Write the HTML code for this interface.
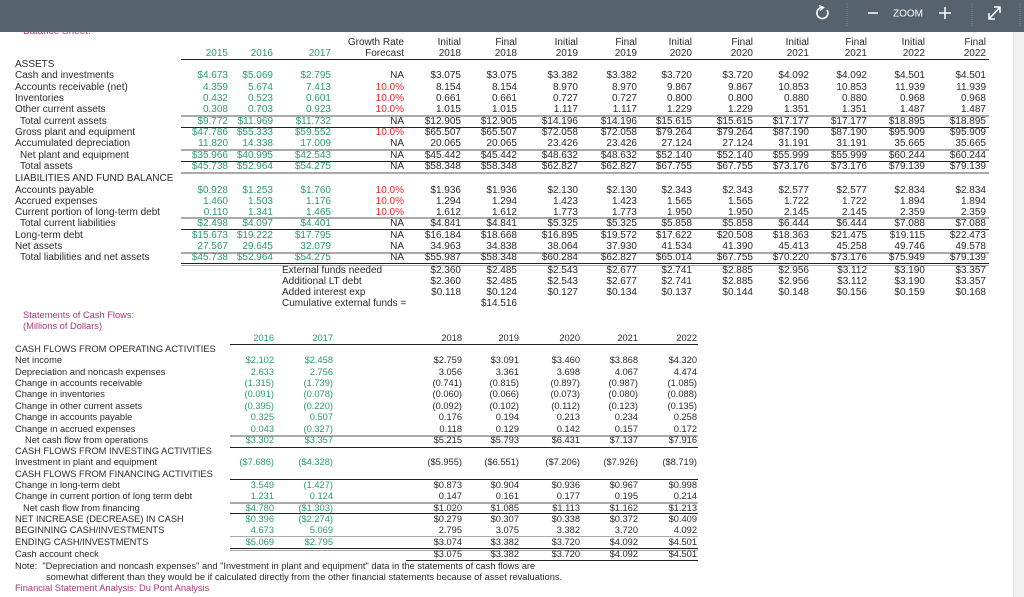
<!DOCTYPE html>
<html><head><meta charset="utf-8">
<style>
*{margin:0;padding:0;box-sizing:border-box}
body{width:1024px;height:597px;overflow:hidden;background:#fff;font-family:"Liberation Sans",Arial,sans-serif;font-size:10px;color:#2a2a2a;position:relative}
.tb{position:absolute;left:0;top:0;width:1024px;height:32px;background:#56636e;z-index:2}
.sb{position:absolute;left:1013px;top:32px;width:11px;height:565px;background:#f1f1f1;border-left:1px solid #ddd}
.r{position:absolute;left:0;width:1010px;height:11px;line-height:11px;white-space:nowrap}
.r span{position:absolute;width:70px;text-align:right}
.lb{position:absolute;left:15px}
.lb2{position:absolute;left:20px}
.g{color:#2c9a6b}
.red{color:#e8262b}
.pu{color:#a23a78}
.a{left:158px}.b{left:203px}.c{left:261px}.d{left:334px}.e{left:391px}.f{left:447px}.gg{left:508px}.h{left:567px}.i{left:622px}.j{left:683px}.k{left:739px}.l{left:797px}.m{left:855px}.n{left:916px}
.p{left:204px}.q{left:263px}.rr{left:392px}.s{left:449px}.t{left:510px}.u{left:568px}.v{left:627px}
.hl{position:absolute;height:1px;background:#222}
.gl{position:absolute;height:2px;background:#aaa}
.cf{font-size:9.3px}
</style></head><body>
<div class="tb">
<svg width="1024" height="32" style="position:absolute;left:0;top:0">
<path d="M822 7.5 A5.5 5.5 0 1 0 827 10" fill="none" stroke="#fff" stroke-width="1.6"/>
<path d="M819 5.5 L823.5 7.5 L820 10.5" fill="none" stroke="#fff" stroke-width="1.4"/>
<line x1="847" y1="3" x2="847" y2="26" stroke="#7d8891" stroke-dasharray="1,1"/>
<line x1="868" y1="13" x2="878" y2="13" stroke="#fff" stroke-width="1.5"/>
<text x="893" y="16.5" fill="#fff" font-family="Liberation Sans" font-size="10">ZOOM</text>
<line x1="939" y1="13" x2="951" y2="13" stroke="#fff" stroke-width="1.5"/>
<line x1="945" y1="7" x2="945" y2="19" stroke="#fff" stroke-width="1.5"/>
<line x1="972" y1="3" x2="972" y2="26" stroke="#7d8891" stroke-dasharray="1,1"/>
<line x1="989" y1="19" x2="1000" y2="7" stroke="#fff" stroke-width="1.5"/>
<path d="M994 7 H1000 V13 M989 13 V19 H995" fill="none" stroke="#fff" stroke-width="1.5"/>
<line x1="1020" y1="3" x2="1020" y2="26" stroke="#7d8891" stroke-dasharray="1,1"/>
</svg>
</div>
<div class="r pu" style="top:26px;left:23px;height:11px;z-index:1"><span style="left:0;width:200px;text-align:left">Balance Sheet:</span></div>
<div class="sb"></div>

<div class="r" style="top:37px"><span class="d">Growth Rate</span><span class="e">Initial</span><span class="f">Final</span><span class="gg">Initial</span><span class="h">Final</span><span class="i">Initial</span><span class="j">Final</span><span class="k">Initial</span><span class="l">Final</span><span class="m">Initial</span><span class="n">Final</span></div>
<div class="r" style="top:48px"><span class="a g">2015</span><span class="b g">2016</span><span class="c g">2017</span><span class="d">Forecast</span><span class="e">2018</span><span class="f">2018</span><span class="gg">2019</span><span class="h">2019</span><span class="i">2020</span><span class="j">2020</span><span class="k">2021</span><span class="l">2021</span><span class="m">2022</span><span class="n">2022</span></div>
<div class="hl" style="top:59px;left:181px;width:808px"></div>

<div class="r" style="top:59px"><b class="lb" style="font-weight:normal">ASSETS</b></div>
<div class="r" style="top:70px"><b class="lb" style="font-weight:normal">Cash and investments</b><span class="a g">$4.673</span><span class="b g">$5.069</span><span class="c g">$2.795</span><span class="d">NA</span><span class="e">$3.075</span><span class="f">$3.075</span><span class="gg">$3.382</span><span class="h">$3.382</span><span class="i">$3.720</span><span class="j">$3.720</span><span class="k">$4.092</span><span class="l">$4.092</span><span class="m">$4.501</span><span class="n">$4.501</span></div>
<div class="r" style="top:82px"><b class="lb" style="font-weight:normal">Accounts receivable (net)</b><span class="a g">4.359</span><span class="b g">5.674</span><span class="c g">7.413</span><span class="d red">10.0%</span><span class="e">8.154</span><span class="f">8.154</span><span class="gg">8.970</span><span class="h">8.970</span><span class="i">9.867</span><span class="j">9.867</span><span class="k">10.853</span><span class="l">10.853</span><span class="m">11.939</span><span class="n">11.939</span></div>
<div class="r" style="top:93px"><b class="lb" style="font-weight:normal">Inventories</b><span class="a g">0.432</span><span class="b g">0.523</span><span class="c g">0.601</span><span class="d red">10.0%</span><span class="e">0.661</span><span class="f">0.661</span><span class="gg">0.727</span><span class="h">0.727</span><span class="i">0.800</span><span class="j">0.800</span><span class="k">0.880</span><span class="l">0.880</span><span class="m">0.968</span><span class="n">0.968</span></div>
<div class="r" style="top:104px"><b class="lb" style="font-weight:normal">Other current assets</b><span class="a g">0.308</span><span class="b g">0.703</span><span class="c g">0.923</span><span class="d red">10.0%</span><span class="e">1.015</span><span class="f">1.015</span><span class="gg">1.117</span><span class="h">1.117</span><span class="i">1.229</span><span class="j">1.229</span><span class="k">1.351</span><span class="l">1.351</span><span class="m">1.487</span><span class="n">1.487</span></div>
<div class="gl" style="top:115px;left:181px;width:808px"></div>
<div class="r" style="top:116px"><b class="lb2" style="font-weight:normal">Total current assets</b><span class="a g">$9.772</span><span class="b g">$11.969</span><span class="c g">$11.732</span><span class="d">NA</span><span class="e">$12.905</span><span class="f">$12.905</span><span class="gg">$14.196</span><span class="h">$14.196</span><span class="i">$15.615</span><span class="j">$15.615</span><span class="k">$17.177</span><span class="l">$17.177</span><span class="m">$18.895</span><span class="n">$18.895</span></div>
<div class="hl" style="top:127px;left:181px;width:808px"></div>
<div class="r" style="top:127px"><b class="lb" style="font-weight:normal">Gross plant and equipment</b><span class="a g">$47.786</span><span class="b g">$55.333</span><span class="c g">$59.552</span><span class="d red">10.0%</span><span class="e">$65.507</span><span class="f">$65.507</span><span class="gg">$72.058</span><span class="h">$72.058</span><span class="i">$79.264</span><span class="j">$79.264</span><span class="k">$87.190</span><span class="l">$87.190</span><span class="m">$95.909</span><span class="n">$95.909</span></div>
<div class="r" style="top:138px"><b class="lb" style="font-weight:normal">Accumulated depreciation</b><span class="a g">11.820</span><span class="b g">14.338</span><span class="c g">17.009</span><span class="d">NA</span><span class="e">20.065</span><span class="f">20.065</span><span class="gg">23.426</span><span class="h">23.426</span><span class="i">27.124</span><span class="j">27.124</span><span class="k">31.191</span><span class="l">31.191</span><span class="m">35.665</span><span class="n">35.665</span></div>
<div class="gl" style="top:149px;left:181px;width:808px"></div>
<div class="r" style="top:150px"><b class="lb2" style="font-weight:normal">Net plant and equipment</b><span class="a g">$35.966</span><span class="b g">$40.995</span><span class="c g">$42.543</span><span class="d">NA</span><span class="e">$45.442</span><span class="f">$45.442</span><span class="gg">$48.632</span><span class="h">$48.632</span><span class="i">$52.140</span><span class="j">$52.140</span><span class="k">$55.999</span><span class="l">$55.999</span><span class="m">$60.244</span><span class="n">$60.244</span></div>
<div class="hl" style="top:161px;left:181px;width:808px"></div>
<div class="r" style="top:161px"><b class="lb2" style="font-weight:normal">Total assets</b><span class="a g">$45.738</span><span class="b g">$52.964</span><span class="c g">$54.275</span><span class="d">NA</span><span class="e">$58.348</span><span class="f">$58.348</span><span class="gg">$62.827</span><span class="h">$62.827</span><span class="i">$67.755</span><span class="j">$67.755</span><span class="k">$73.176</span><span class="l">$73.176</span><span class="m">$79.139</span><span class="n">$79.139</span></div>
<div class="gl" style="top:172px;left:181px;width:808px"></div>
<div class="r" style="top:173px"><b class="lb" style="font-weight:normal">LIABILITIES AND FUND BALANCE</b></div>
<div class="r" style="top:185px"><b class="lb" style="font-weight:normal">Accounts payable</b><span class="a g">$0.928</span><span class="b g">$1.253</span><span class="c g">$1.760</span><span class="d red">10.0%</span><span class="e">$1.936</span><span class="f">$1.936</span><span class="gg">$2.130</span><span class="h">$2.130</span><span class="i">$2.343</span><span class="j">$2.343</span><span class="k">$2.577</span><span class="l">$2.577</span><span class="m">$2.834</span><span class="n">$2.834</span></div>
<div class="r" style="top:196px"><b class="lb" style="font-weight:normal">Accrued expenses</b><span class="a g">1.460</span><span class="b g">1.503</span><span class="c g">1.176</span><span class="d red">10.0%</span><span class="e">1.294</span><span class="f">1.294</span><span class="gg">1.423</span><span class="h">1.423</span><span class="i">1.565</span><span class="j">1.565</span><span class="k">1.722</span><span class="l">1.722</span><span class="m">1.894</span><span class="n">1.894</span></div>
<div class="r" style="top:207px"><b class="lb" style="font-weight:normal">Current portion of long-term debt</b><span class="a g">0.110</span><span class="b g">1.341</span><span class="c g">1.465</span><span class="d red">10.0%</span><span class="e">1.612</span><span class="f">1.612</span><span class="gg">1.773</span><span class="h">1.773</span><span class="i">1.950</span><span class="j">1.950</span><span class="k">2.145</span><span class="l">2.145</span><span class="m">2.359</span><span class="n">2.359</span></div>
<div class="gl" style="top:217px;left:181px;width:808px"></div>
<div class="r" style="top:218px"><b class="lb2" style="font-weight:normal">Total current liabilities</b><span class="a g">$2.498</span><span class="b g">$4.097</span><span class="c g">$4.401</span><span class="d">NA</span><span class="e">$4.841</span><span class="f">$4.841</span><span class="gg">$5.325</span><span class="h">$5.325</span><span class="i">$5.858</span><span class="j">$5.858</span><span class="k">$6.444</span><span class="l">$6.444</span><span class="m">$7.088</span><span class="n">$7.088</span></div>
<div class="hl" style="top:229px;left:181px;width:808px"></div>
<div class="r" style="top:230px"><b class="lb" style="font-weight:normal">Long-term debt</b><span class="a g">$15.673</span><span class="b g">$19.222</span><span class="c g">$17.795</span><span class="d">NA</span><span class="e">$16.184</span><span class="f">$18.668</span><span class="gg">$16.895</span><span class="h">$19.572</span><span class="i">$17.622</span><span class="j">$20.508</span><span class="k">$18.363</span><span class="l">$21.475</span><span class="m">$19.115</span><span class="n">$22.473</span></div>
<div class="r" style="top:241px"><b class="lb" style="font-weight:normal">Net assets</b><span class="a g">27.567</span><span class="b g">29.645</span><span class="c g">32.079</span><span class="d">NA</span><span class="e">34.963</span><span class="f">34.838</span><span class="gg">38.064</span><span class="h">37.930</span><span class="i">41.534</span><span class="j">41.390</span><span class="k">45.413</span><span class="l">45.258</span><span class="m">49.746</span><span class="n">49.578</span></div>
<div class="gl" style="top:252px;left:181px;width:808px"></div>
<div class="r" style="top:252px"><b class="lb2" style="font-weight:normal">Total liabilities and net assets</b><span class="a g">$45.738</span><span class="b g">$52.964</span><span class="c g">$54.275</span><span class="d">NA</span><span class="e">$55.987</span><span class="f">$58.348</span><span class="gg">$60.284</span><span class="h">$62.827</span><span class="i">$65.014</span><span class="j">$67.755</span><span class="k">$70.220</span><span class="l">$73.176</span><span class="m">$75.949</span><span class="n">$79.139</span></div>
<div class="hl" style="top:263px;left:181px;width:808px"></div>
<div class="gl" style="top:265px;left:181px;width:808px;height:1px"></div>
<div class="r" style="top:265px"><b style="font-weight:normal;position:absolute;left:282px">External funds needed</b><span class="e">$2.360</span><span class="f">$2.485</span><span class="gg">$2.543</span><span class="h">$2.677</span><span class="i">$2.741</span><span class="j">$2.885</span><span class="k">$2.956</span><span class="l">$3.112</span><span class="m">$3.190</span><span class="n">$3.357</span></div>
<div class="r" style="top:276px"><b style="font-weight:normal;position:absolute;left:282px">Additional LT debt</b><span class="e">$2.360</span><span class="f">$2.485</span><span class="gg">$2.543</span><span class="h">$2.677</span><span class="i">$2.741</span><span class="j">$2.885</span><span class="k">$2.956</span><span class="l">$3.112</span><span class="m">$3.190</span><span class="n">$3.357</span></div>
<div class="r" style="top:287px"><b style="font-weight:normal;position:absolute;left:282px">Added interest exp</b><span class="e">$0.118</span><span class="f">$0.124</span><span class="gg">$0.127</span><span class="h">$0.134</span><span class="i">$0.137</span><span class="j">$0.144</span><span class="k">$0.148</span><span class="l">$0.156</span><span class="m">$0.159</span><span class="n">$0.168</span></div>
<div class="r" style="top:298px"><b style="font-weight:normal;position:absolute;left:282px">Cumulative external funds =</b><span class="f">$14.516</span></div>

<div class="r pu cf" style="top:310px"><b style="font-weight:normal;position:absolute;left:23px">Statements of Cash Flows:</b></div>
<div class="r pu cf" style="top:321px"><b style="font-weight:normal;position:absolute;left:23px">(Millions of Dollars)</b></div>

<div class="r cf" style="top:333px"><span class="p g">2016</span><span class="q g">2017</span><span class="rr">2018</span><span class="s">2019</span><span class="t">2020</span><span class="u">2021</span><span class="v">2022</span></div>
<div class="hl" style="top:344px;left:230px;width:468px"></div>
<div class="r cf" style="top:344px"><b class="lb" style="font-weight:normal">CASH FLOWS FROM OPERATING ACTIVITIES</b></div>
<div class="r cf" style="top:355px"><b class="lb" style="font-weight:normal">Net income</b><span class="p g">$2.102</span><span class="q g">$2.458</span><span class="rr">$2.759</span><span class="s">$3.091</span><span class="t">$3.460</span><span class="u">$3.868</span><span class="v">$4.320</span></div>
<div class="r cf" style="top:367px"><b class="lb" style="font-weight:normal">Depreciation and noncash expenses</b><span class="p g">2.633</span><span class="q g">2.756</span><span class="rr">3.056</span><span class="s">3.361</span><span class="t">3.698</span><span class="u">4.067</span><span class="v">4.474</span></div>
<div class="r cf" style="top:378px"><b class="lb" style="font-weight:normal">Change in accounts receivable</b><span class="p g">(1.315)</span><span class="q g">(1.739)</span><span class="rr">(0.741)</span><span class="s">(0.815)</span><span class="t">(0.897)</span><span class="u">(0.987)</span><span class="v">(1.085)</span></div>
<div class="r cf" style="top:389px"><b class="lb" style="font-weight:normal">Change in inventories</b><span class="p g">(0.091)</span><span class="q g">(0.078)</span><span class="rr">(0.060)</span><span class="s">(0.066)</span><span class="t">(0.073)</span><span class="u">(0.080)</span><span class="v">(0.088)</span></div>
<div class="r cf" style="top:401px"><b class="lb" style="font-weight:normal">Change in other current assets</b><span class="p g">(0.395)</span><span class="q g">(0.220)</span><span class="rr">(0.092)</span><span class="s">(0.102)</span><span class="t">(0.112)</span><span class="u">(0.123)</span><span class="v">(0.135)</span></div>
<div class="r cf" style="top:412px"><b class="lb" style="font-weight:normal">Change in accounts payable</b><span class="p g">0.325</span><span class="q g">0.507</span><span class="rr">0.176</span><span class="s">0.194</span><span class="t">0.213</span><span class="u">0.234</span><span class="v">0.258</span></div>
<div class="r cf" style="top:424px"><b class="lb" style="font-weight:normal">Change in accrued expenses</b><span class="p g">0.043</span><span class="q g">(0.327)</span><span class="rr">0.118</span><span class="s">0.129</span><span class="t">0.142</span><span class="u">0.157</span><span class="v">0.172</span></div>
<div class="gl" style="top:435px;left:230px;width:468px"></div>
<div class="r cf" style="top:435px"><b class="lb2" style="font-weight:normal;left:25px">Net cash flow from operations</b><span class="p g">$3.302</span><span class="q g">$3.357</span><span class="rr">$5.215</span><span class="s">$5.793</span><span class="t">$6.431</span><span class="u">$7.137</span><span class="v">$7.916</span></div>
<div class="hl" style="top:447px;left:230px;width:468px"></div>
<div class="r cf" style="top:446px"><b class="lb" style="font-weight:normal">CASH FLOWS FROM INVESTING ACTIVITIES</b></div>
<div class="r cf" style="top:457px"><b class="lb" style="font-weight:normal">Investment in plant and equipment</b><span class="p g">($7.686)</span><span class="q g">($4.328)</span><span class="rr">($5.955)</span><span class="s">($6.551)</span><span class="t">($7.206)</span><span class="u">($7.926)</span><span class="v">($8.719)</span></div>
<div class="hl" style="top:479px;left:230px;width:468px"></div>
<div class="r cf" style="top:469px"><b class="lb" style="font-weight:normal">CASH FLOWS FROM FINANCING ACTIVITIES</b></div>
<div class="r cf" style="top:480px"><b class="lb" style="font-weight:normal">Change in long-term debt</b><span class="p g">3.549</span><span class="q g">(1.427)</span><span class="rr">$0.873</span><span class="s">$0.904</span><span class="t">$0.936</span><span class="u">$0.967</span><span class="v">$0.998</span></div>
<div class="r cf" style="top:491px"><b class="lb" style="font-weight:normal">Change in current portion of long term debt</b><span class="p g">1.231</span><span class="q g">0.124</span><span class="rr">0.147</span><span class="s">0.161</span><span class="t">0.177</span><span class="u">0.195</span><span class="v">0.214</span></div>
<div class="gl" style="top:502px;left:230px;width:468px"></div>
<div class="r cf" style="top:503px"><b class="lb2" style="font-weight:normal;left:23px">Net cash flow from financing</b><span class="p g">$4.780</span><span class="q g">($1.303)</span><span class="rr">$1.020</span><span class="s">$1.085</span><span class="t">$1.113</span><span class="u">$1.162</span><span class="v">$1.213</span></div>
<div class="hl" style="top:513px;left:230px;width:468px"></div>
<div class="r cf" style="top:514px"><b class="lb" style="font-weight:normal">NET INCREASE (DECREASE) IN CASH</b><span class="p g">$0.396</span><span class="q g">($2.274)</span><span class="rr">$0.279</span><span class="s">$0.307</span><span class="t">$0.338</span><span class="u">$0.372</span><span class="v">$0.409</span></div>
<div class="r cf" style="top:525px"><b class="lb" style="font-weight:normal">BEGINNING CASH/INVESTMENTS</b><span class="p g">4.673</span><span class="q g">5.069</span><span class="rr">2.795</span><span class="s">3.075</span><span class="t">3.382</span><span class="u">3.720</span><span class="v">4.092</span></div>
<div class="gl" style="top:536px;left:230px;width:468px;height:1px"></div>
<div class="r cf" style="top:537px"><b class="lb" style="font-weight:normal">ENDING CASH/INVESTMENTS</b><span class="p g">$5.069</span><span class="q g">$2.795</span><span class="rr">$3.074</span><span class="s">$3.382</span><span class="t">$3.720</span><span class="u">$4.092</span><span class="v">$4.501</span></div>
<div class="hl" style="top:548px;left:230px;width:468px"></div>
<div class="gl" style="top:550px;left:230px;width:468px;height:1px"></div>
<div class="r cf" style="top:549px"><b class="lb" style="font-weight:normal">Cash account check</b><span class="rr">$3.075</span><span class="s">$3.382</span><span class="t">$3.720</span><span class="u">$4.092</span><span class="v">$4.501</span></div>
<div class="hl" style="top:560px;left:406px;width:292px"></div>
<div class="r cf" style="top:561px"><b class="lb" style="font-weight:normal">Note:&nbsp; "Depreciation and noncash expenses" and "Investment in plant and equipment" data in the statements of cash flows are</b></div>
<div class="r cf" style="top:572px"><b style="font-weight:normal;position:absolute;left:46px">somewhat different than they would be if calculated directly from the other financial statements because of asset revaluations.</b></div>
<div class="r cf pu" style="top:583px"><b class="lb" style="font-weight:normal">Financial Statement Analysis: Du Pont Analysis</b></div>
</body></html>
